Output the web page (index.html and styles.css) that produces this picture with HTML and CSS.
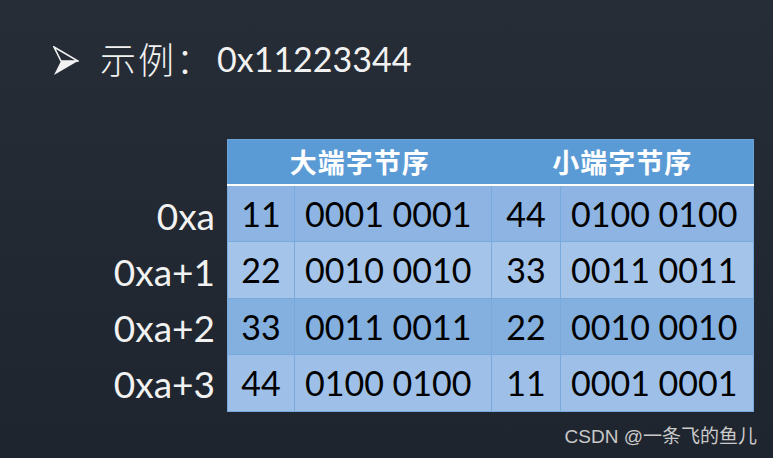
FILE: index.html
```html
<!DOCTYPE html>
<html lang="zh">
<head>
<meta charset="utf-8">
<title>示例</title>
<link rel="stylesheet" href="styles.css">
</head>
<body>
<div class="slide">
  <div class="title">
    <svg class="bullet" width="26" height="30" viewBox="0 0 26 30">
      <path d="M1 1 L25 15 L8 15 Z" fill="none" stroke="#f2f2f2" stroke-width="1.6" stroke-linejoin="miter"/>
      <path d="M8 15 L25 15 L1 29 Z" fill="#f2f2f2"/>
    </svg>
    <span class="cn">示例：</span><span class="hex">0x11223344</span>
  </div>
  <div class="content">
    <div class="labels">
      <div class="label">0xa</div>
      <div class="label">0xa+1</div>
      <div class="label">0xa+2</div>
      <div class="label">0xa+3</div>
    </div>
    <table class="bytes">
      <thead>
        <tr><th colspan="2">大端字节序</th><th colspan="2">小端字节序</th></tr>
      </thead>
      <tbody>
        <tr class="r1"><td class="b">11</td><td class="bin">0001 0001</td><td class="b">44</td><td class="bin">0100 0100</td></tr>
        <tr class="r2"><td class="b">22</td><td class="bin">0010 0010</td><td class="b">33</td><td class="bin">0011 0011</td></tr>
        <tr class="r3"><td class="b">33</td><td class="bin">0011 0011</td><td class="b">22</td><td class="bin">0010 0010</td></tr>
        <tr class="r4"><td class="b">44</td><td class="bin">0100 0100</td><td class="b">11</td><td class="bin">0001 0001</td></tr>
      </tbody>
    </table>
  </div>
  <div class="mark">CSDN @一条飞的鱼儿</div>
</div>
</body>
</html>
```
FILE: styles.css
```css
html, body {
  margin: 0;
  padding: 0;
}
body {
  width: 773px;
  height: 458px;
  overflow: hidden;
  background: linear-gradient(180deg, #262d36 0%, #222932 50%, #1f252e 100%);
  font-family: Lato, "Open Sans", "Noto Sans CJK SC", sans-serif;
}
.slide {
  position: relative;
  width: 773px;
  height: 458px;
}
.title {
  display: flex;
  align-items: center;
  padding: 38px 0 0 53px;
  height: 40px;
  color: #f2f2f2;
}
.bullet {
  display: block;
  margin-top: 5px;
  margin-right: 21px;
}
.cn {
  font-family: "Noto Sans CJK SC", sans-serif;
  font-weight: 300;
  font-size: 36px;
  line-height: 40px;
  letter-spacing: 2px;
}
.hex {
  font-family: Lato, sans-serif;
  font-size: 34px;
  line-height: 40px;
  margin-left: 3px;
  margin-top: 2px;
}
.content {
  display: flex;
  margin-top: 61px;
}
.labels {
  width: 215px;
  padding: 49px 12px 0 0;
  display: flex;
  flex-direction: column;
  align-items: flex-end;
}
.label {
  height: 56px;
  line-height: 56px;
  font-size: 37px;
  color: #f2f2f2;
}
.bytes {
  border-collapse: collapse;
  font-size: 34px;
  color: #000;
  border: 1px solid #6ea3da;
}
.bytes th {
  background: #5b9bd5;
  color: #fff;
  font-family: "Noto Sans CJK SC", sans-serif;
  font-weight: 700;
  font-size: 27px;
  height: 44px;
  padding: 0;
  line-height: 30px;
  letter-spacing: 1px;
  border-bottom: 2px solid #ffffff;
}
.bytes tbody tr {
  height: 56px;
}
.bytes td {
  padding: 0;
  border: 1px solid #79aadd;
  line-height: 30px;
}
.bytes tr:first-child td { border-top: none; }
.bytes td.b {
  text-align: center;
}
.bytes tr td:nth-child(1) { width: 66px; }
.bytes tr td:nth-child(2) { width: 186px; padding-left: 10px; }
.bytes tr td:nth-child(3) { width: 68px; }
.bytes tr td:nth-child(4) { width: 182px; padding-left: 10px; }
.r1 td { background: #8db4e2; }
.r2 td { background: #a5c4e9; }
.r3 td { background: #84b0e0; }
.r4 td { background: #9ec0e8; }
.mark {
  position: absolute;
  right: 16px;
  bottom: 10px;
  font-family: "Liberation Sans", "Noto Sans CJK SC", sans-serif;
  font-size: 19px;
  color: #c9c9c9;
}
```
